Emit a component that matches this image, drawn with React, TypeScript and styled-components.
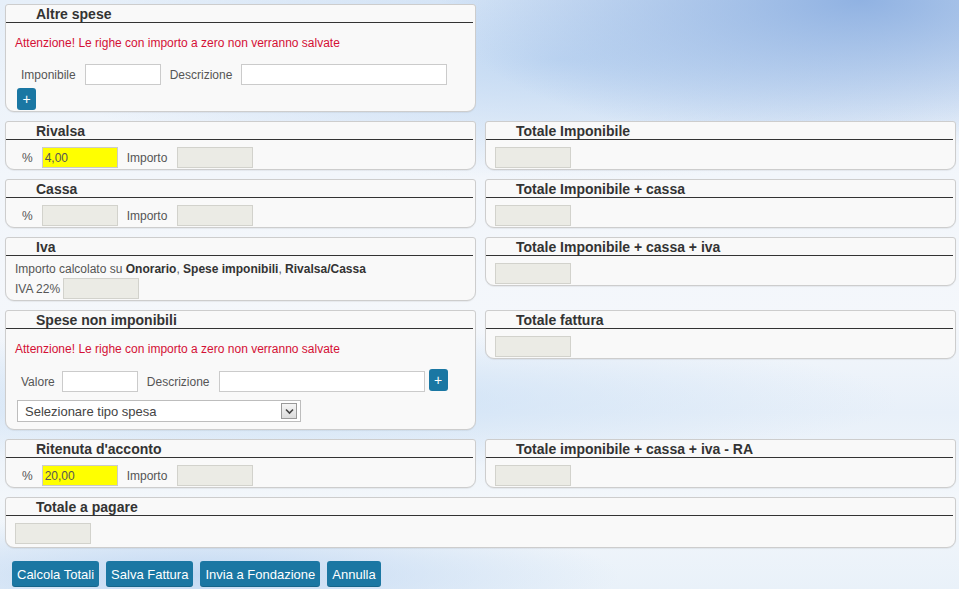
import React from 'react'
import styled, { createGlobalStyle } from 'styled-components'

const GlobalStyle = createGlobalStyle`
	html, body {
		margin: 0;
		padding: 0;
	}
	body {
		min-height: 589px;
		font-family: 'Liberation Sans', Arial, sans-serif;
		font-size: 12px;
		color: #555;
		background:
			radial-gradient(ellipse 420px 150px at 860px 0px, rgba(140, 175, 225, 0.95), rgba(140, 175, 225, 0) 100%),
			radial-gradient(ellipse 520px 120px at 560px 60px, rgba(190, 214, 242, 0.9), rgba(190, 214, 242, 0) 100%),
			radial-gradient(ellipse 600px 70px at 300px 400px, rgba(200, 222, 245, 0.8), rgba(200, 222, 245, 0) 100%),
			radial-gradient(ellipse 420px 60px at 200px 575px, rgba(190, 214, 242, 0.9), rgba(190, 214, 242, 0) 100%),
			linear-gradient(180deg, #e6eff9 0%, #f2f6fb 30%, #f4f7fb 55%, #e8f0f9 70%, #f3f7fb 85%, #e9f1f9 100%);
	}
`

const Page = styled.div`
	padding: 4px 3px 0 5px;
`

const Grid = styled.div`
	display: grid;
	grid-template-columns: 471px 471px;
	column-gap: 9px;
	row-gap: 9px;
	align-items: start;
`

const Panel = styled.section<{ $wide?: boolean }>`
	grid-column: ${p => (p.$wide ? '1 / -1' : 'auto')};
	background: #f9f9f9;
	border: 1px solid #cdcdcd;
	border-radius: 3px 3px 9px 9px;
	box-shadow: 0 1px 1px rgba(0, 0, 0, 0.06);
`

const Title = styled.h3`
	margin: 0 2px 0 0;
	padding: 2px 0 0 30px;
	height: 15px;
	line-height: 15px;
	font-size: 14px;
	font-weight: bold;
	color: #333;
	border-bottom: 1px solid #333;
`

const Body = styled.div<{ $pt?: number; $pb?: number }>`
	padding: ${p => p.$pt ?? 7}px 9px ${p => p.$pb ?? 1}px;
`

const Notice = styled.div<{ $mb?: number }>`
	color: #d41035;
	line-height: 14px;
	margin-bottom: ${p => p.$mb ?? 14}px;
`

const Row = styled.div<{ $indent?: number; $mt?: number }>`
	display: flex;
	align-items: center;
	padding-left: ${p => p.$indent ?? 0}px;
	margin-top: ${p => p.$mt ?? 0}px;
`

const Label = styled.label<{ $gap?: number }>`
	margin-right: ${p => p.$gap ?? 9}px;
`

const Input = styled.input<{ $w?: number; $tone?: 'plain' | 'yellow' | 'off'; $mr?: number }>`
	box-sizing: border-box;
	width: ${p => p.$w ?? 76}px;
	height: 21px;
	margin: 0 ${p => p.$mr ?? 9}px 0 0;
	padding: 1px 2px;
	font: 12px 'Liberation Sans', Arial, sans-serif;
	color: #555;
	border: 1px solid ${p => (p.$tone === 'off' ? '#d2d2cc' : '#cbcbcb')};
	background: ${p =>
		p.$tone === 'yellow' ? '#ffff00' : p.$tone === 'off' ? '#ebebe5' : '#fff'};
	outline: none;
`

const PlusButton = styled.button<{ $lift?: number }>`
	box-sizing: border-box;
	width: 19px;
	height: 22px;
	padding: 0;
	margin: ${p => -(p.$lift ?? 0)}px 0 0 2px;
	border: 0;
	border-radius: 3px;
	background: #1a77a3;
	color: #fff;
	font: 14px 'Liberation Sans', Arial, sans-serif;
	line-height: 22px;
`

const Text = styled.div`
	line-height: 18px;
	color: #555;
	b {
		color: #333;
	}
`

const SelectBox = styled.div`
	box-sizing: border-box;
	display: flex;
	align-items: center;
	justify-content: space-between;
	width: 284px;
	height: 22px;
	margin: 8px 0 0 2px;
	padding: 0 3px 0 7px;
	background: #fff;
	border: 1px solid #bdbdbd;
	font-size: 13px;
	color: #444;
`

const ArrowBox = styled.span`
	box-sizing: border-box;
	display: flex;
	align-items: center;
	justify-content: center;
	width: 16px;
	height: 16px;
	border: 1px solid #9a9a9a;
	background: linear-gradient(#f6f6f6, #dcdcdc);
`

const Actions = styled.div`
	display: flex;
	gap: 7px;
	padding: 13px 0 0 7px;
`

const ActionButton = styled.button`
	height: 26px;
	padding: 0 5px;
	border: 0;
	border-radius: 3px;
	background: #1b77a3;
	color: #fff;
	font: 13px 'Liberation Sans', Arial, sans-serif;
	box-shadow: inset 0 -1px 0 rgba(0, 0, 0, 0.15);
`

function Totale({ title }: { title: string }) {
	return (
		<Panel>
			<Title>{title}</Title>
			<Body>
				<Input $tone="off" readOnly />
			</Body>
		</Panel>
	)
}

function Percentuale({ title, value }: { title: string; value?: string }) {
	return (
		<Panel>
			<Title>{title}</Title>
			<Body>
				<Row $indent={7}>
					<Label>%</Label>
					<Input $tone={value ? 'yellow' : 'off'} defaultValue={value} readOnly={!value} />
					<Label $gap={10}>Importo</Label>
					<Input $tone="off" readOnly />
				</Row>
			</Body>
		</Panel>
	)
}

const Empty = styled.div``

export default function App() {
	return (
		<>
			<GlobalStyle />
			<Page>
				<Grid>
					<Panel>
						<Title>Altre spese</Title>
						<Body $pt={13} $pb={1}>
							<Notice>Attenzione! Le righe con importo a zero non verranno salvate</Notice>
							<Row $indent={6}>
								<Label>Imponibile</Label>
								<Input />
								<Label>Descrizione</Label>
								<Input $w={206} />
							</Row>
							<Row $mt={3}>
								<PlusButton>+</PlusButton>
							</Row>
						</Body>
					</Panel>
					<Empty />

					<Percentuale title="Rivalsa" value="4,00" />
					<Totale title="Totale Imponibile" />

					<Percentuale title="Cassa" />
					<Totale title="Totale Imponibile + cassa" />

					<Panel>
						<Title>Iva</Title>
						<Body $pt={4} $pb={1}>
							<Text>
								Importo calcolato su <b>Onorario</b>, <b>Spese imponibili</b>,{' '}
								<b>Rivalsa/Cassa</b>
							</Text>
							<Row>
								<Label $gap={3}>IVA 22%</Label>
								<Input $tone="off" readOnly />
							</Row>
						</Body>
					</Panel>
					<Totale title="Totale Imponibile + cassa + iva" />

					<Panel>
						<Title>Spese non imponibili</Title>
						<Body $pt={13} $pb={7}>
							<Notice $mb={15}>Attenzione! Le righe con importo a zero non verranno salvate</Notice>
							<Row $indent={6}>
								<Label $gap={7}>Valore</Label>
								<Input />
								<Label>Descrizione</Label>
								<Input $w={206} $mr={2} />
								<PlusButton $lift={3}>+</PlusButton>
							</Row>
							<SelectBox>
								<span>Selezionare tipo spesa</span>
								<ArrowBox>
									<svg width="9" height="7" viewBox="0 0 9 7">
										<path d="M1 1.5 L4.5 5 L8 1.5" fill="none" stroke="#444" strokeWidth="1.6" />
									</svg>
								</ArrowBox>
							</SelectBox>
						</Body>
					</Panel>
					<Totale title="Totale fattura" />

					<Percentuale title="Ritenuta d'acconto" value="20,00" />
					<Totale title="Totale imponibile + cassa + iva - RA" />

					<Panel $wide>
						<Title>Totale a pagare</Title>
						<Body $pb={3}>
							<Input $tone="off" readOnly />
						</Body>
					</Panel>
				</Grid>
				<Actions>
					<ActionButton>Calcola Totali</ActionButton>
					<ActionButton>Salva Fattura</ActionButton>
					<ActionButton>Invia a Fondazione</ActionButton>
					<ActionButton>Annulla</ActionButton>
				</Actions>
			</Page>
		</>
	)
}
